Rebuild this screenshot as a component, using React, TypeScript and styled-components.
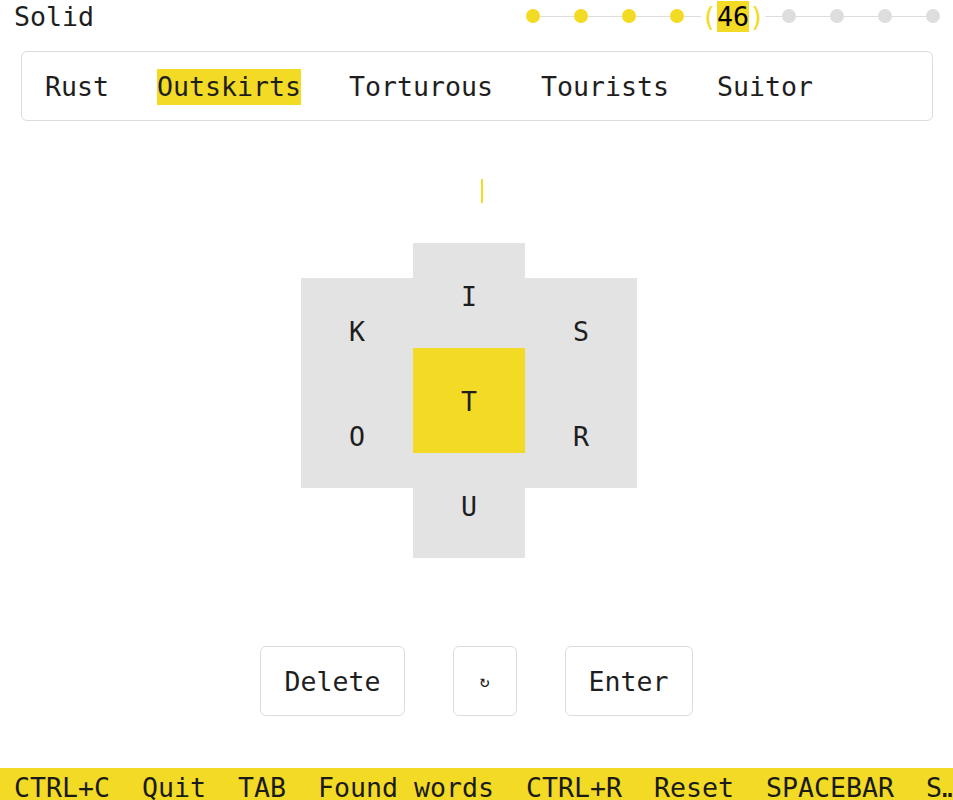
import React from "react";
import styled, { createGlobalStyle } from "styled-components";

const YELLOW = "#f3da24";
const INK = "#1e1e1e";
const GREY_CELL = "#e3e3e3";
const BORDER = "#dcdcdc";

const GlobalStyle = createGlobalStyle`
  html, body { margin: 0; padding: 0; background: #ffffff; overflow: hidden; }
  body {
    font-family: "DejaVu Sans Mono", "Liberation Mono", monospace;
    font-size: 26.58px;
    color: ${INK};
  }
  * { box-sizing: border-box; }
`;

const Page = styled.div`
  width: 953px;
  height: 800px;
  display: flex;
  flex-direction: column;
`;

const Header = styled.header`
  height: 32px;
  display: flex;
  align-items: center;
  justify-content: space-between;
  padding: 0 13px 0 14px;
`;

const Title = styled.span`
  line-height: 32px;
  padding-top: 2px;
  white-space: pre;
`;

const Progress = styled.div`
  display: flex;
  align-items: center;
`;

const Dot = styled.span<{ $filled: boolean }>`
  width: 14px;
  height: 14px;
  border-radius: 50%;
  background: ${(p) => (p.$filled ? YELLOW : "#dddddd")};
  flex: none;
`;

const Line = styled.span<{ $w: number }>`
  width: ${(p) => p.$w}px;
  height: 1px;
  background: #dddddd;
  flex: none;
`;

const Score = styled.span`
  display: flex;
  align-items: center;
  white-space: pre;
  line-height: 31px;
`;

const Paren = styled.span`
  color: ${YELLOW};
`;

const ScoreValue = styled.span`
  background: ${YELLOW};
  color: #000;
  display: inline-block;
  height: 31px;
  line-height: 31px;
`;

const WordBox = styled.section`
  margin: 19px 20px 0 21px;
  height: 70px;
  border: 1px solid ${BORDER};
  border-radius: 6px;
  display: flex;
  align-items: center;
  padding: 1px 0 0 23px;
  gap: 48px;
`;

const Word = styled.span<{ $active?: boolean }>`
  display: inline-block;
  line-height: 36px;
  height: 36px;
  white-space: pre;
  background: ${(p) => (p.$active ? YELLOW : "transparent")};
`;

const InputRow = styled.div`
  margin-top: 58px;
  height: 24px;
  display: flex;
  justify-content: center;
  padding-left: 10px;
`;

const Caret = styled.span`
  width: 2px;
  height: 24px;
  background: ${YELLOW};
`;

const Board = styled.div`
  margin-top: 40px;
  display: flex;
  justify-content: center;
  padding-right: 15px;
`;

const Column = styled.div<{ $offset: number }>`
  display: flex;
  flex-direction: column;
  margin-top: ${(p) => p.$offset}px;
`;

const Cell = styled.div<{ $center?: boolean }>`
  width: 112px;
  height: 105px;
  display: flex;
  align-items: center;
  justify-content: center;
  padding-top: 4px;
  background: ${(p) => (p.$center ? YELLOW : GREY_CELL)};
  line-height: 1;
`;

const Controls = styled.div`
  margin-top: 88px;
  display: flex;
  justify-content: center;
  gap: 48px;
`;

const Button = styled.button<{ $icon?: boolean }>`
  height: 70px;
  padding: 0 23px;
  background: #ffffff;
  border: 1px solid ${BORDER};
  border-radius: 6px;
  font-family: "DejaVu Sans Mono", "Liberation Mono", monospace;
  font-size: ${(p) => (p.$icon ? "17px" : "26.58px")};
  color: ${INK};
  width: ${(p) => (p.$icon ? "64px" : "auto")};
  display: flex;
  align-items: center;
  justify-content: center;
`;

const StatusBar = styled.footer`
  margin-top: auto;
  height: 32px;
  background: ${YELLOW};
  padding: 5px 0 0 14px;
  line-height: 29px;
  white-space: pre;
  overflow: hidden;
  color: #1a1a1a;
`;

const words = ["Rust", "Outskirts", "Torturous", "Tourists", "Suitor"];

function ProgressTrack() {
  const items: React.ReactNode[] = [];
  for (let i = 0; i < 4; i++) {
    if (i > 0) items.push(<Line key={`la${i}`} $w={34} />);
    items.push(<Dot key={`da${i}`} $filled />);
  }
  items.push(<Line key="lb" $w={17} />);
  items.push(
    <Score key="score">
      <Paren>(</Paren>
      <ScoreValue>46</ScoreValue>
      <Paren>)</Paren>
    </Score>
  );
  items.push(<Line key="lc" $w={17} />);
  for (let i = 0; i < 4; i++) {
    if (i > 0) items.push(<Line key={`ld${i}`} $w={34} />);
    items.push(<Dot key={`dd${i}`} $filled={false} />);
  }
  return <Progress>{items}</Progress>;
}

export default function App() {
  return (
    <>
      <GlobalStyle />
      <Page>
        <Header>
          <Title>Solid</Title>
          <ProgressTrack />
        </Header>
        <WordBox>
          {words.map((w) => (
            <Word key={w} $active={w === "Outskirts"}>
              {w}
            </Word>
          ))}
        </WordBox>
        <InputRow>
          <Caret />
        </InputRow>
        <Board>
          <Column $offset={35}>
            <Cell>K</Cell>
            <Cell>O</Cell>
          </Column>
          <Column $offset={0}>
            <Cell>I</Cell>
            <Cell $center>T</Cell>
            <Cell>U</Cell>
          </Column>
          <Column $offset={35}>
            <Cell>S</Cell>
            <Cell>R</Cell>
          </Column>
        </Board>
        <Controls>
          <Button>Delete</Button>
          <Button $icon>↻</Button>
          <Button>Enter</Button>
        </Controls>
        <StatusBar>{"CTRL+C  Quit  TAB  Found words  CTRL+R  Reset  SPACEBAR  S…"}</StatusBar>
      </Page>
    </>
  );
}
